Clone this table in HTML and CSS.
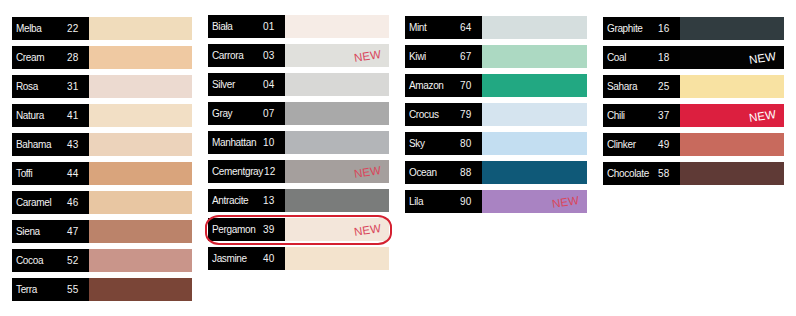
FILE: index.html
```html
<!DOCTYPE html>
<html lang="pl">
<head>
<meta charset="utf-8">
<title>Kolory</title>
<link rel="stylesheet" href="styles.css">
</head>
<body>
<main class="palette">
  <section class="col col-1">
    <div class="row"><div class="label"><span class="name">Melba</span><span class="num">22</span></div><div class="swatch" style="background:#f0dcbb"></div></div>
    <div class="row"><div class="label"><span class="name">Cream</span><span class="num">28</span></div><div class="swatch" style="background:#efc9a2"></div></div>
    <div class="row"><div class="label"><span class="name">Rosa</span><span class="num">31</span></div><div class="swatch" style="background:#ecdad0"></div></div>
    <div class="row"><div class="label"><span class="name">Natura</span><span class="num">41</span></div><div class="swatch" style="background:#f2dfc5"></div></div>
    <div class="row"><div class="label"><span class="name">Bahama</span><span class="num">43</span></div><div class="swatch" style="background:#ecd3bb"></div></div>
    <div class="row"><div class="label"><span class="name">Toffi</span><span class="num">44</span></div><div class="swatch" style="background:#d9a47c"></div></div>
    <div class="row"><div class="label"><span class="name">Caramel</span><span class="num">46</span></div><div class="swatch" style="background:#e8c6a2"></div></div>
    <div class="row"><div class="label"><span class="name">Siena</span><span class="num">47</span></div><div class="swatch" style="background:#bb836a"></div></div>
    <div class="row"><div class="label"><span class="name">Cocoa</span><span class="num">52</span></div><div class="swatch" style="background:#c9958a"></div></div>
    <div class="row"><div class="label"><span class="name">Terra</span><span class="num">55</span></div><div class="swatch" style="background:#7a4537"></div></div>
  </section>
  <section class="col col-2">
    <div class="row"><div class="label"><span class="name">Biała</span><span class="num">01</span></div><div class="swatch" style="background:#f6ece6"></div></div>
    <div class="row"><div class="label"><span class="name">Carrora</span><span class="num">03</span></div><div class="swatch" style="background:#e0e0dc"><span class="new">NEW</span></div></div>
    <div class="row"><div class="label"><span class="name">Silver</span><span class="num">04</span></div><div class="swatch" style="background:#d8d8d6"></div></div>
    <div class="row"><div class="label"><span class="name">Gray</span><span class="num">07</span></div><div class="swatch" style="background:#a9a9a9"></div></div>
    <div class="row"><div class="label"><span class="name">Manhattan</span><span class="num">10</span></div><div class="swatch" style="background:#b3b5b8"></div></div>
    <div class="row"><div class="label"><span class="name">Cementgray</span><span class="num">12</span></div><div class="swatch" style="background:#a59f9d"><span class="new">NEW</span></div></div>
    <div class="row"><div class="label"><span class="name">Antracite</span><span class="num">13</span></div><div class="swatch" style="background:#7a7c7b"></div></div>
    <div class="row row-marked"><div class="label"><span class="name">Pergamon</span><span class="num">39</span></div><div class="swatch" style="background:#f3e6da"><span class="new">NEW</span></div></div>
    <div class="row"><div class="label"><span class="name">Jasmine</span><span class="num">40</span></div><div class="swatch" style="background:#f3e3cd"></div></div>
  </section>
  <section class="col col-3">
    <div class="row"><div class="label"><span class="name">Mint</span><span class="num">64</span></div><div class="swatch" style="background:#d5dede"></div></div>
    <div class="row"><div class="label"><span class="name">Kiwi</span><span class="num">67</span></div><div class="swatch" style="background:#acd9c2"></div></div>
    <div class="row"><div class="label"><span class="name">Amazon</span><span class="num">70</span></div><div class="swatch" style="background:#22a882"></div></div>
    <div class="row"><div class="label"><span class="name">Crocus</span><span class="num">79</span></div><div class="swatch" style="background:#d5e4ef"></div></div>
    <div class="row"><div class="label"><span class="name">Sky</span><span class="num">80</span></div><div class="swatch" style="background:#c3def1"></div></div>
    <div class="row"><div class="label"><span class="name">Ocean</span><span class="num">88</span></div><div class="swatch" style="background:#0f5978"></div></div>
    <div class="row"><div class="label"><span class="name">Lila</span><span class="num">90</span></div><div class="swatch" style="background:#a983c2"><span class="new">NEW</span></div></div>
  </section>
  <section class="col col-4">
    <div class="row"><div class="label"><span class="name">Graphite</span><span class="num">16</span></div><div class="swatch" style="background:#313c40"></div></div>
    <div class="row"><div class="label"><span class="name">Coal</span><span class="num">18</span></div><div class="swatch" style="background:#030303"><span class="new new-light">NEW</span></div></div>
    <div class="row"><div class="label"><span class="name">Sahara</span><span class="num">25</span></div><div class="swatch" style="background:#f8e2a2"></div></div>
    <div class="row"><div class="label"><span class="name">Chili</span><span class="num">37</span></div><div class="swatch" style="background:#dc1f3f"><span class="new new-light">NEW</span></div></div>
    <div class="row"><div class="label"><span class="name">Clinker</span><span class="num">49</span></div><div class="swatch" style="background:#c86a5d"></div></div>
    <div class="row"><div class="label"><span class="name">Chocolate</span><span class="num">58</span></div><div class="swatch" style="background:#5f3a36"></div></div>
  </section>
</main>
</body>
</html>
```
FILE: styles.css
```css
html, body {
  margin: 0;
  padding: 0;
  background: #ffffff;
}

body {
  font-family: "Liberation Sans", Arial, sans-serif;
  width: 796px;
  height: 316px;
  overflow: hidden;
}

.palette {
  display: grid;
  grid-template-columns: 180px 181px 182px 181px;
  column-gap: 16px;
  align-items: start;
  padding-left: 12px;
}

.col {
  display: flex;
  flex-direction: column;
  gap: 6px;
}

.col-1 { padding-top: 17px; }
.col-2 { padding-top: 15px; }
.col-3 { padding-top: 16px; }
.col-4 { padding-top: 17px; }

.row {
  display: flex;
  height: 23px;
}

.label {
  flex: none;
  width: 77px;
  box-sizing: border-box;
  padding-left: 4px;
  background: #000000;
  color: #f2f2f2;
  display: flex;
  align-items: center;
  font-size: 10px;
  line-height: 1;
  overflow: hidden;
}

.name {
  flex: none;
  min-width: 50px;
  margin-right: 1px;
  white-space: nowrap;
  letter-spacing: -0.35px;
}

.num {
  flex: none;
  letter-spacing: 0.2px;
}

.swatch {
  flex: 1;
  display: flex;
  align-items: center;
  justify-content: flex-end;
  padding-right: 8px;
}

.new {
  font-size: 11.5px;
  line-height: 1;
  color: #d9475c;
  letter-spacing: 0.2px;
  transform: rotate(-9deg);
  margin-top: 2px;
}

.new-light {
  color: #ffffff;
}

.row-marked {
  position: relative;
}

.row-marked::after {
  content: "";
  position: absolute;
  top: -3px;
  bottom: -4px;
  left: -3px;
  right: -3px;
  border: 2px solid #d42030;
  border-radius: 14px / 12px;
  pointer-events: none;
}
```
